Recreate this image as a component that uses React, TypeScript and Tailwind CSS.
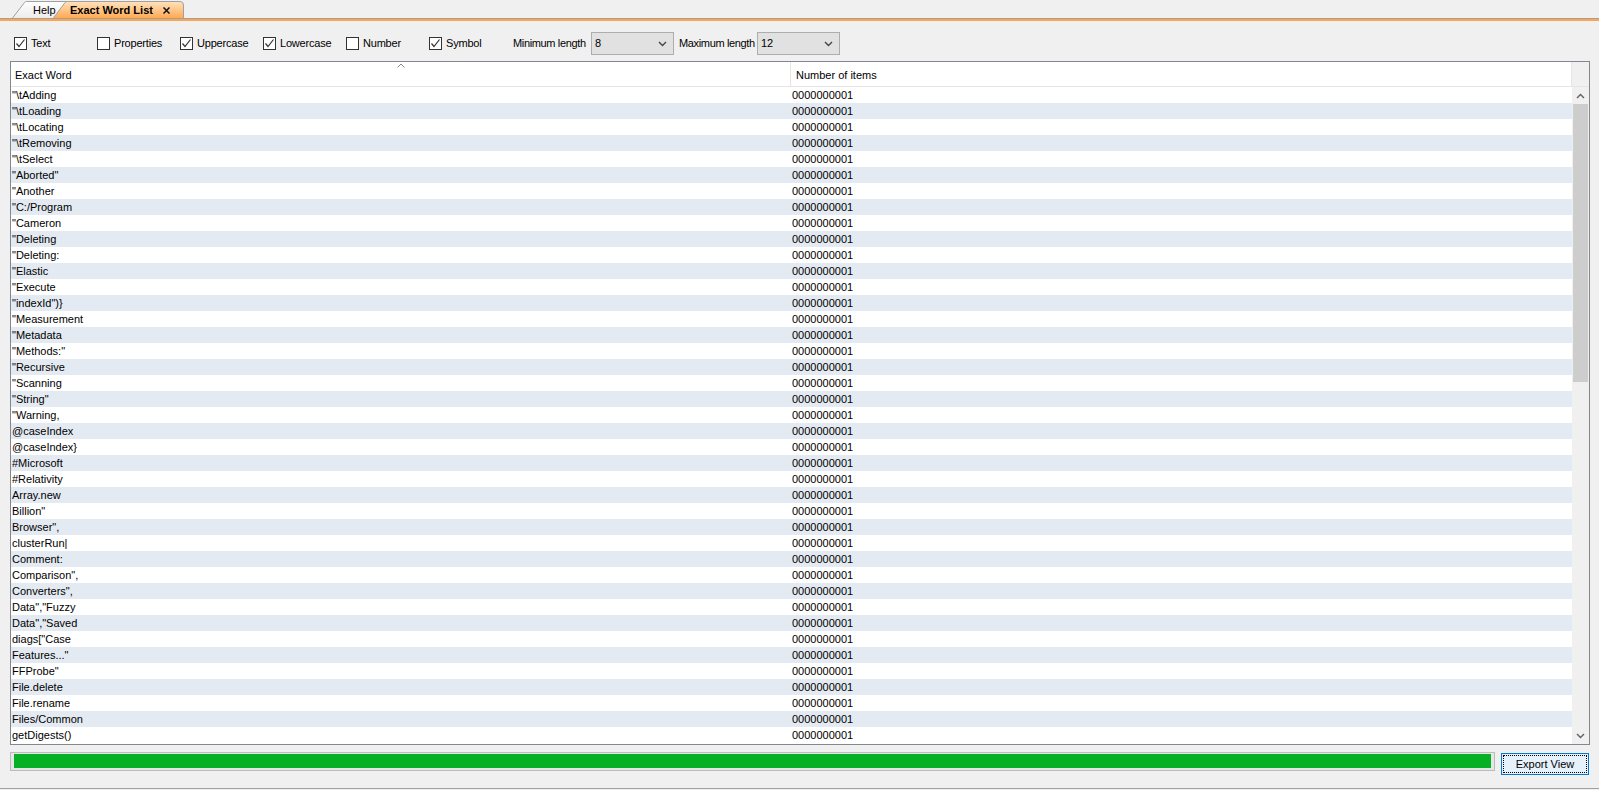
import { type ReactNode } from 'react';

const words = [
  '"\\tAdding',
  '"\\tLoading',
  '"\\tLocating',
  '"\\tRemoving',
  '"\\tSelect',
  '"Aborted"',
  '"Another',
  '"C:/Program',
  '"Cameron',
  '"Deleting',
  '"Deleting:',
  '"Elastic',
  '"Execute',
  '"indexId")}',
  '"Measurement',
  '"Metadata',
  '"Methods:"',
  '"Recursive',
  '"Scanning',
  '"String"',
  '"Warning,',
  '@caseIndex',
  '@caseIndex}',
  '#Microsoft',
  '#Relativity',
  'Array.new',
  'Billion"',
  'Browser",',
  'clusterRun|',
  'Comment:',
  'Comparison",',
  'Converters",',
  'Data","Fuzzy',
  'Data","Saved',
  'diags["Case',
  'Features..."',
  'FFProbe"',
  'File.delete',
  'File.rename',
  'Files/Common',
  'getDigests()',
];

const filters = [
  { label: 'Text', checked: true },
  { label: 'Properties', checked: false },
  { label: 'Uppercase', checked: true },
  { label: 'Lowercase', checked: true },
  { label: 'Number', checked: false },
  { label: 'Symbol', checked: true },
];

function Checkbox({ checked, label }: { checked: boolean; label: string }) {
  return (
    <div className="flex w-[83px] items-center gap-[4px]">
      <span className="flex h-[13px] w-[13px] items-center justify-center border border-[#333333] bg-white">
        {checked && (
          <svg width="11" height="11" viewBox="0 0 11 11">
            <path d="M1.5 5.5 L4 8.5 L9.5 1.5" fill="none" stroke="#333333" strokeWidth="1.2" />
          </svg>
        )}
      </span>
      <span className="whitespace-nowrap tracking-[-0.2px]">{label}</span>
    </div>
  );
}

function Chevron({ up = false, color = '#606060' }: { up?: boolean; color?: string }) {
  return (
    <svg width="9" height="6" viewBox="0 0 9 6">
      <path
        d={up ? 'M1 5 L4.5 1.5 L8 5' : 'M1 1 L4.5 4.5 L8 1'}
        fill="none"
        stroke={color}
        strokeWidth="1.4"
      />
    </svg>
  );
}

function Select({ value }: { value: string }) {
  return (
    <div className="flex h-[23px] w-[83px] shrink-0 items-center justify-between border border-[#adadad] bg-[#e1e1e1] pl-[3px] pr-[6px]">
      <span>{value}</span>
      <Chevron color="#444444" />
    </div>
  );
}

function HeaderCell({ children, className }: { children: ReactNode; className: string }) {
  return <div className={`flex h-full items-center pt-[2px] ${className}`}>{children}</div>;
}

export default function App() {
  return (
    <div className="flex h-[790px] w-[1599px] flex-col overflow-hidden bg-[#f0f0f0] font-['Liberation_Sans',Arial,sans-serif] text-[11px] text-black">
      {/* Tabs */}
      <div className="flex h-[18px] items-end pl-[12px]">
        <div className="relative h-[17px] w-[58px]">
          <svg className="absolute inset-0" width="58" height="17" viewBox="0 0 58 17">
            <defs>
              <linearGradient id="helpg" x1="0" y1="0" x2="0" y2="1">
                <stop offset="0" stopColor="#ffffff" />
                <stop offset="1" stopColor="#ececec" />
              </linearGradient>
            </defs>
            <path d="M0.5 17 L12.5 1.5 Q13.2 0.5 14.5 0.5 L58 0.5 L58 17" fill="url(#helpg)" stroke="#a0a0a0" />
          </svg>
          <span className="relative block pl-[21px] pt-[1px] leading-[16px]">Help</span>
        </div>
        <div className="relative z-10 ml-[-17px] h-[17px] w-[131px]">
          <svg className="absolute inset-0" width="131" height="17" viewBox="0 0 131 17">
            <defs>
              <linearGradient id="tabg" x1="0" y1="0" x2="0" y2="1">
                <stop offset="0" stopColor="#ffe2bd" />
                <stop offset="1" stopColor="#ffaa55" />
              </linearGradient>
            </defs>
            <path d="M0.5 17 L12 1.5 Q12.8 0.5 14 0.5 L127 0.5 Q130.5 0.5 130.5 4 L130.5 17" fill="url(#tabg)" stroke="#a0a0a0" />
          </svg>
          <div className="relative flex items-center pl-[17px] pt-[1px] leading-[16px]">
            <span className="font-bold">Exact Word List</span>
            <svg className="ml-[10px]" width="7" height="7" viewBox="0 0 7 7">
              <path d="M0.5 0.5 L6.5 6.5 M6.5 0.5 L0.5 6.5" stroke="#111111" strokeWidth="1.5" />
            </svg>
          </div>
        </div>
      </div>
      <div className="h-px bg-[#a0a0a0]" />
      <div className="h-[2px] bg-[#ffa64d]" />

      {/* Content */}
      <div className="flex h-[768px] flex-col border-b border-[#a0a0a0] px-[10px]">
        {/* Filter bar */}
        <div className="mt-[11px] flex h-[23px] items-center pl-[4px]">
          {filters.map((f) => (
            <Checkbox key={f.label} checked={f.checked} label={f.label} />
          ))}
          <span className="ml-[1px] w-[78px] shrink-0 whitespace-nowrap tracking-[-0.35px]">Minimum length</span>
          <Select value="8" />
          <span className="ml-[5px] w-[78px] shrink-0 whitespace-nowrap tracking-[-0.35px]">Maximum length</span>
          <Select value="12" />
        </div>

        {/* Table */}
        <div className="mt-[6px] flex h-[684px] w-[1580px] flex-col border border-[#828790] bg-white">
          <div className="flex h-[25px] border-b border-[#e5e5e5]">
            <HeaderCell className="relative w-[780px] border-r border-[#e5e5e5] pl-[4px]">
              <svg className="absolute left-[386px] top-[1px]" width="8" height="5" viewBox="0 0 8 5">
                <path d="M0.5 4.5 L4 1 L7.5 4.5" fill="none" stroke="#8a8a8a" />
              </svg>
              Exact Word
            </HeaderCell>
            <HeaderCell className="w-[781px] border-r border-[#e5e5e5] pl-[5px]">Number of items</HeaderCell>
            <div className="w-[17px] bg-[#f0f0f0]" />
          </div>
          <div className="flex flex-1 overflow-hidden">
            <div className="w-[1561px]">
              {words.map((w, i) => (
                <div
                  key={i}
                  className={`flex h-[16px] items-center leading-[16px] ${i % 2 === 1 ? 'bg-[#e4eaf1]' : 'bg-white'}`}
                >
                  <span className="w-[780px] pl-[1px]">{w}</span>
                  <span className="pl-[1px]">0000000001</span>
                </div>
              ))}
            </div>
            <div className="flex w-[17px] flex-col bg-[#f0f0f0]">
              <div className="flex h-[17px] items-center justify-center">
                <Chevron up />
              </div>
              <div className="ml-[1px] h-[278px] w-[15px] bg-[#cdcdcd]" />
              <div className="flex-1" />
              <div className="flex h-[17px] items-center justify-center">
                <Chevron />
              </div>
            </div>
          </div>
        </div>

        {/* Footer */}
        <div className="mt-[7px] flex items-start">
          <div className="flex h-[19px] w-[1486px] border border-[#bcbcbc] bg-[#e6e6e6] px-[3px] pb-[2px] pt-[1px]">
            <div className="h-full w-full bg-[#06b025]" />
          </div>
          <button
            type="button"
            className="ml-[6px] mt-[1px] h-[22px] w-[88px] border border-[#0078d7] bg-[#e5f1fb] p-[1px]"
          >
            <div className="flex h-full w-full items-center justify-center border border-dotted border-black">
              Export View
            </div>
          </button>
        </div>
      </div>
    </div>
  );
}
